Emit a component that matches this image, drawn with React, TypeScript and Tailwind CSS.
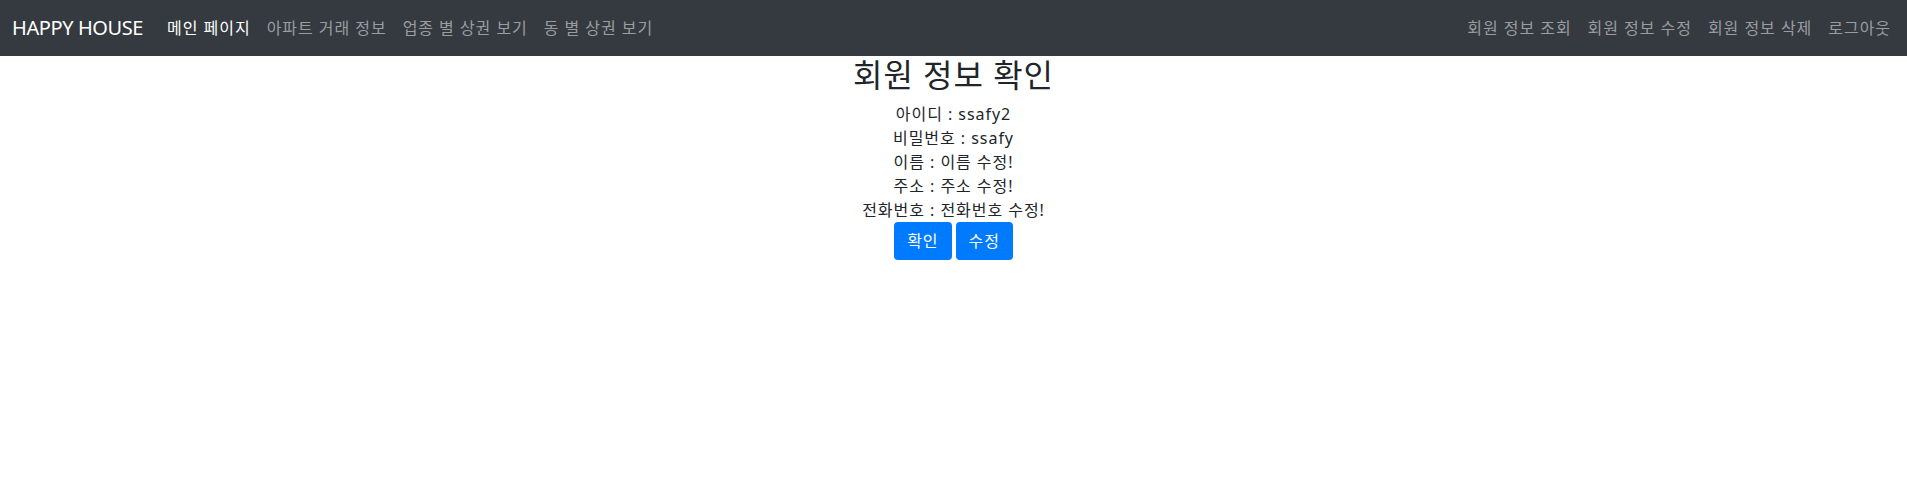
import React from 'react';

const font = { fontFamily: '"Noto Sans", "Noto Sans CJK KR", sans-serif' };

export default function App() {
    const leftLinks = ["아파트 거래 정보", "업종 별 상권 보기", "동 별 상권 보기"];
    const rightLinks = ["회원 정보 조회", "회원 정보 수정", "회원 정보 삭제", "로그아웃"];

    const info = [
        ["아이디", "ssafy2"],
        ["비밀번호", "ssafy"],
        ["이름", "이름 수정!"],
        ["주소", "주소 수정!"],
        ["전화번호", "전화번호 수정!"],
    ];

    return (
        <div className="min-h-[483px] bg-white text-[#212529] tracking-[0.06em]" style={font}>
            {/* 상단 네비게이션 */}
            <nav className="h-14 bg-[#343a40] flex items-center pl-3 pr-2">
                <span className="text-xl text-white mr-4 tracking-[-0.02em]">HAPPY HOUSE</span>
                <ul className="flex items-center">
                    <li className="px-2 text-white">메인 페이지</li>
                    {leftLinks.map((l, i) => (
                        <li key={i} className="px-2 text-[#9a9da0]">{l}</li>
                    ))}
                </ul>
                <ul className="flex items-center ml-auto">
                    {rightLinks.map((l, i) => (
                        <li key={i} className="px-2 text-[#9a9da0]">{l}</li>
                    ))}
                </ul>
            </nav>

            {/* 회원 정보 */}
            <div className="text-center">
                <h2 className="text-[32px] leading-[1.2] mb-2 font-normal">회원 정보 확인</h2>
                {info.map(([k, v], i) => (
                    <div key={i} className="text-base leading-6">{k} : {v}</div>
                ))}
                <div className="flex justify-center gap-1">
                    <button className="bg-[#007bff] text-white rounded px-[13px] h-[38px] leading-6">확인</button>
                    <button className="bg-[#007bff] text-white rounded px-[13px] h-[38px] leading-6">수정</button>
                </div>
            </div>
        </div>
    );
}
